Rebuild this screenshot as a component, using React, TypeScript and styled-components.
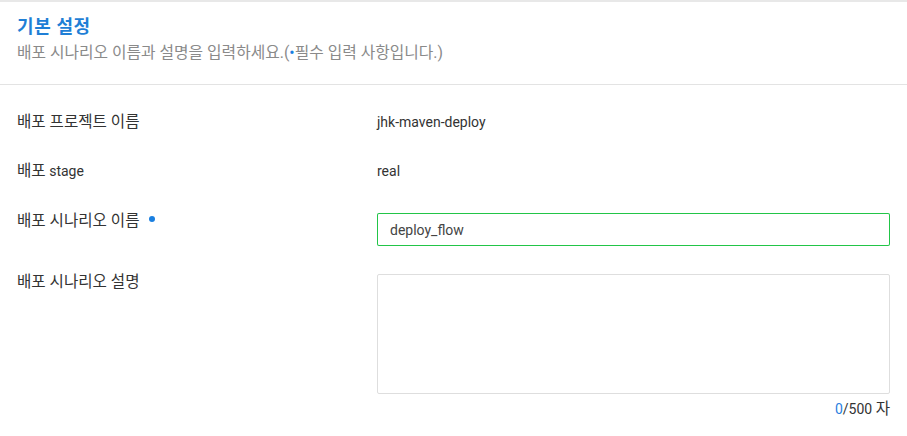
import React from "react";
import styled, { createGlobalStyle } from "styled-components";

const Global = createGlobalStyle`
  html, body { margin: 0; padding: 0; background: #fff; }
  body { font-family: Roboto, "Noto Sans CJK KR", sans-serif; color: #333; }
  * { box-sizing: border-box; }
`;

const Panel = styled.section`
  width: 907px;
  border-top: 2px solid #e8e8e8;
  background: #fff;
`;

const Header = styled.header`
  padding: 14px 17px 21px;
  border-bottom: 1px solid #e3e3e3;
`;

const Title = styled.h2`
  margin: 0;
  font-size: 18px;
  line-height: 22px;
  letter-spacing: 0.6px;
  font-weight: 700;
  color: #1f7fd6;
`;

const Subtitle = styled.p`
  margin: 5px 0 0;
  font-size: 15.8px;
  line-height: 20px;
  color: #8a8a8a;
`;

const Ko = styled.span`
  font-size: 15.6px;
`;

const Dot = styled.span`
  color: #1a7fe0;
`;

const Body = styled.div`
  padding: 27px 17px 0;
  display: flex;
  flex-direction: column;
`;

const Row = styled.div<{ $pb: number }>`
  display: grid;
  grid-template-columns: 360px 1fr;
  align-items: start;
  padding-bottom: ${(p) => p.$pb}px;
`;

const Label = styled.div`
  font-size: 14px;
  line-height: 20px;
  height: 20px;
  color: #333;
  display: flex;
  align-items: center;
  white-space: pre;
`;

const Required = styled.span`
  width: 6px;
  height: 6px;
  border-radius: 50%;
  background: #1a7fe0;
  margin: -4px 0 0 9px;
`;

const Value = styled.div`
  font-size: 14px;
  line-height: 20px;
  color: #333;
`;

const InputBox = styled.div`
  margin-top: 2px;
  height: 33px;
  padding: 1px;
  border-radius: 2px;
  background: rgb(34, 197, 72);
  display: flex;
`;

const Input = styled.input`
  flex: 1;
  min-width: 0;
  height: 100%;
  padding: 0 12px;
  border: 0 none;
  border-radius: 1px;
  font-family: Roboto, "Noto Sans CJK KR", sans-serif;
  font-size: 14px;
  color: #444;
  outline: none;
  background: #fff;
`;

const Field = styled.div`
  display: flex;
  flex-direction: column;
  margin-top: 2px;
`;

const TextArea = styled.textarea`
  display: block;
  width: 100%;
  height: 120px;
  padding: 8px 12px;
  border: 1px solid #dedede;
  border-radius: 2px;
  font-family: Roboto, "Noto Sans CJK KR", sans-serif;
  font-size: 14px;
  color: #444;
  resize: none;
  outline: none;
`;

const Counter = styled.div`
  margin-top: 5px;
  text-align: right;
  font-size: 14px;
  line-height: 20px;
  color: #333;
`;

const Count = styled.span`
  color: #2a7fe0;
`;

export default function App() {
  return (
    <>
      <Global />
      <Panel>
        <Header>
          <Title>기본 설정</Title>
          <Subtitle>
            배포 시나리오 이름과 설명을 입력하세요.(<Dot>•</Dot>필수 입력 사항입니다.)
          </Subtitle>
        </Header>
        <Body>
          <Row $pb={29}>
            <Label>
              <Ko>배포 프로젝트 이름</Ko>
            </Label>
            <Value>jhk-maven-deploy</Value>
          </Row>
          <Row $pb={30}>
            <Label>
              <Ko>배포</Ko> stage
            </Label>
            <Value>real</Value>
          </Row>
          <Row $pb={26}>
            <Label>
              <Ko>배포 시나리오 이름</Ko>
              <Required />
            </Label>
            <InputBox>
              <Input defaultValue="deploy_flow" />
            </InputBox>
          </Row>
          <Row $pb={0}>
            <Label>
              <Ko>배포 시나리오 설명</Ko>
            </Label>
            <Field>
              <TextArea />
              <Counter>
                <Count>0</Count>/500 <Ko>자</Ko>
              </Counter>
            </Field>
          </Row>
        </Body>
      </Panel>
    </>
  );
}
